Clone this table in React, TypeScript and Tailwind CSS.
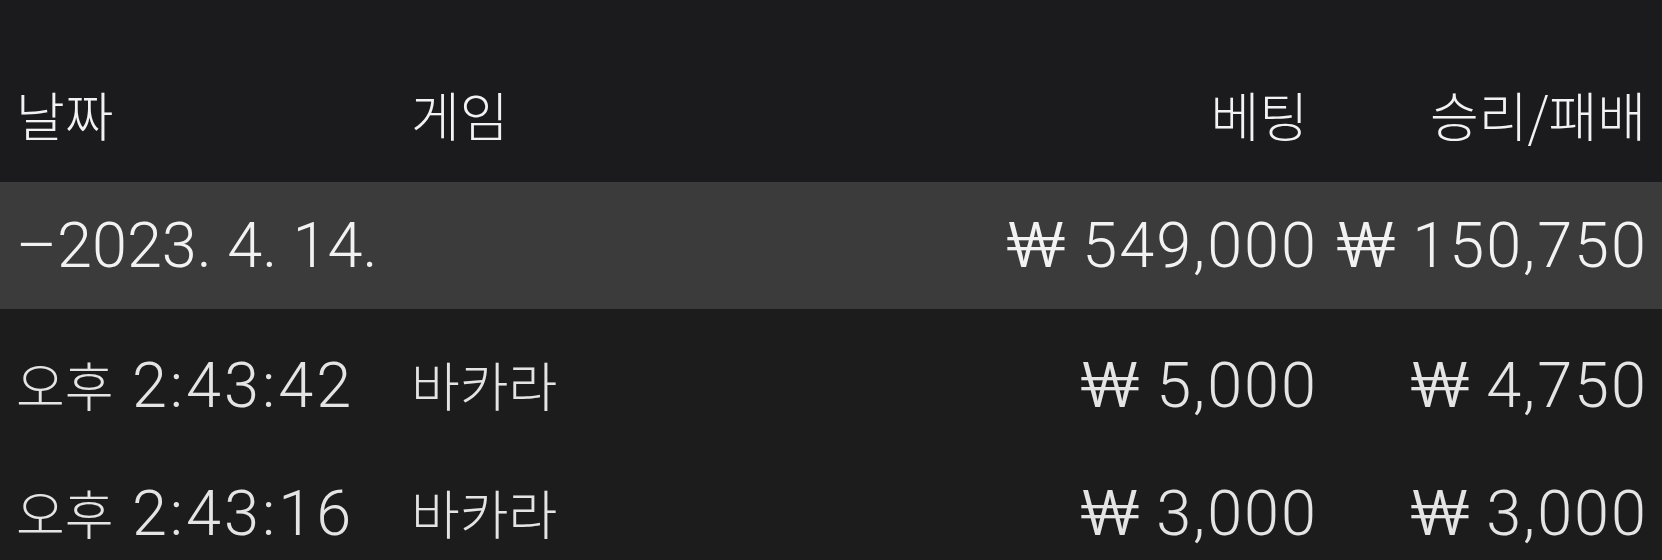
import React from "react";

type Row = {
  period: string;
  time: string;
  game: string;
  bet: string;
  result: string;
};

const rows: Row[] = [
  { period: "오후", time: "2:43:42", game: "바카라", bet: "5,000", result: "4,750" },
  { period: "오후", time: "2:43:16", game: "바카라", bet: "3,000", result: "3,000" },
];

const grid = "grid grid-cols-[395px_1fr_330px_330px] pl-4 pr-4";

const Ko = ({ children }: { children: React.ReactNode }) => (
  <span className="text-[53px] tracking-normal font-['Noto_Sans_CJK_KR',sans-serif] font-light">{children}</span>
);

const Won = ({ amount }: { amount: string }) => (
  <span className="whitespace-pre">
    <span className="inline-block scale-x-125 mx-[5px] tracking-normal">₩</span> {amount}
  </span>
);

export default function App() {
  return (
    <div className="w-[1662px] h-[560px] overflow-hidden bg-[#1c1c1c] text-[#f2f2f2] font-['Roboto','Noto_Sans_CJK_KR',sans-serif] font-light text-[63px] tracking-[2px] leading-none">
      {/* Header */}
      <div className={`${grid} h-[182px] items-end pb-[35px] bg-[#1b1b1d]`}>
        <div>
          <Ko>날짜</Ko>
        </div>
        <div>
          <Ko>게임</Ko>
        </div>
        <div className="text-right pr-2">
          <Ko>베팅</Ko>
        </div>
        <div className="text-right">
          <Ko>승리/패배</Ko>
        </div>
      </div>

      {/* Day summary */}
      <div className={`${grid} h-[127px] items-center bg-[#3b3b3b]`}>
        <div className="tracking-normal">–2023. 4. 14.</div>
        <div />
        <div className="text-right -mr-[2px]">
          <Won amount="549,000" />
        </div>
        <div className="text-right -mr-[2px]">
          <Won amount="150,750" />
        </div>
      </div>

      {/* Bets */}
      <div className="mt-3 text-[#e4e4e4]">
        {rows.map((r) => (
          <div key={r.time} className={`${grid} h-[128px] items-center`}>
            <div className="whitespace-pre tracking-[3px]">
              <Ko>{r.period}</Ko> {r.time}
            </div>
            <div>
              <Ko>{r.game}</Ko>
            </div>
            <div className="text-right -mr-[2px]">
              <Won amount={r.bet} />
            </div>
            <div className="text-right -mr-[2px]">
              <Won amount={r.result} />
            </div>
          </div>
        ))}
      </div>
    </div>
  );
}
